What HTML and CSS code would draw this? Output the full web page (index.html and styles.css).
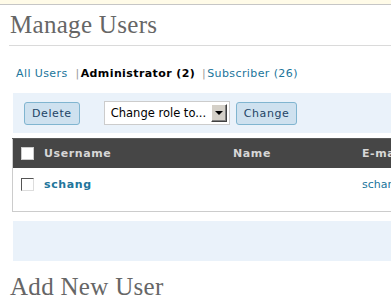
FILE: index.html
```html
<!DOCTYPE html>
<html lang="en">
<head>
    <meta charset="UTF-8">
    <title>Manage Users</title>
    <link rel="stylesheet" href="styles.css">
</head>
<body>
    <div class="notice-strip"></div>
    <div class="wrap">
        <h2 class="page-title">Manage Users</h2>

        <ul class="subsubsub">
            <li><a href="#">All Users</a><span class="sep">|</span></li>
            <li><a href="#" class="current">Administrator (2)</a><span class="sep">|</span></li>
            <li><a href="#">Subscriber (26)</a></li>
        </ul>

        <div class="tablenav">
            <button type="button" class="button">Delete</button>
            <div class="role-select">
                <span class="role-label">Change role to...</span>
                <span class="role-arrow"></span>
            </div>
            <button type="button" class="button">Change</button>
        </div>

        <table class="widefat">
            <thead>
                <tr>
                    <th class="check-column"><span class="check head"></span></th>
                    <th class="col-user">Username</th>
                    <th class="col-name">Name</th>
                    <th class="col-email">E-mail</th>
                </tr>
            </thead>
            <tbody>
                <tr>
                    <td class="check-column"><span class="check"></span></td>
                    <td class="col-user"><a href="#" class="user-link">schang</a></td>
                    <td class="col-name"></td>
                    <td class="col-email"><a href="#">schang@example.com</a></td>
                </tr>
            </tbody>
        </table>

        <div class="tablenav empty"></div>

        <h2 class="section-title">Add New User</h2>
    </div>
</body>
</html>
```

FILE: styles.css
```css
body {
    margin: 0;
    font-family: "DejaVu Sans", Verdana, sans-serif;
    font-size: 11px;
    color: #333;
    background: #fff;
    overflow: hidden;
    width: 391px;
    height: 307px;
}

a {
    color: #21759b;
    text-decoration: none;
}

.notice-strip {
    height: 4px;
    background: #fffbe8;
    border-bottom: 1px solid #c6c6c6;
}

.wrap {
    width: 600px;
}

h2 {
    font-family: "Liberation Serif", "Times New Roman", serif;
    font-weight: normal;
    font-size: 25px;
    line-height: 29px;
    color: #666;
    margin: 0;
}

.page-title {
    margin-left: 9px;
    padding: 5px 0 6px 1px;
    border-bottom: 1px solid #dadada;
    letter-spacing: 0.3px;
}

.subsubsub {
    list-style: none;
    margin: 19px 0 0;
    padding: 0 0 0 16px;
    display: flex;
    line-height: 18px;
    letter-spacing: 0.4px;
}

.subsubsub .sep {
    color: #999;
    margin: 0 1px 0 8px;
}

.subsubsub li + li .sep {
    margin-left: 7px;
}

.subsubsub a.current {
    color: #000;
    font-weight: bold;
}

.tablenav {
    margin: 10px 0 0 13px;
    background: #eaf2fa;
    height: 40px;
    padding: 0 11px;
    display: flex;
    align-items: center;
}

.tablenav.empty {
    margin-top: 9px;
}

.button {
    font-family: "DejaVu Sans", Verdana, sans-serif;
    font-size: 11px;
    letter-spacing: 0.6px;
    color: #246;
    background: #cee1ef;
    border: 1px solid #80b5d0;
    border-radius: 3px;
    height: 23px;
    padding: 0 7px 0 7px;
}

.role-select {
    margin: 0 6px 0 24px;
    width: 117px;
    height: 22px;
    background: #fff;
    border: 1px solid #ccc;
    display: flex;
    align-items: center;
    justify-content: space-between;
    padding: 0 1px 0 6px;
    box-sizing: content-box;
    font-size: 11.5px;
    color: #000;
}

.role-arrow {
    width: 14px;
    height: 16px;
    background: #d4d0c8;
    border: 1px solid;
    border-color: #fff #404040 #404040 #fff;
    box-shadow: inset -1px -1px 0 #808080;
    position: relative;
    margin-right: 1px;
}

.role-arrow::after {
    content: "";
    position: absolute;
    left: 3px;
    top: 6px;
    border-left: 4px solid transparent;
    border-right: 4px solid transparent;
    border-top: 4px solid #000;
}

.widefat {
    margin: 5px 0 0 12px;
    width: 560px;
    border-collapse: collapse;
    border: 1px solid #ccc;
    border-top: none;
}

.widefat thead th {
    background: #464646;
    border-top: 1px solid #5a5a5a;
    color: #d7d7d7;
    font-weight: bold;
    text-align: left;
    height: 29px;
    padding: 0;
    letter-spacing: 0.6px;
}

.widefat td {
    height: 43px;
    padding: 0;
    vertical-align: top;
}

.widefat td .check,
.widefat td a {
    margin-top: 10px;
    display: inline-block;
}

.check-column {
    width: 23px;
    padding-left: 8px !important;
}

.col-user {
    width: 189px;
}

.col-name {
    width: 129px;
}

.user-link {
    font-weight: bold;
    letter-spacing: 0.6px;
}

.check {
    display: inline-block;
    width: 11px;
    height: 11px;
    background: #fff;
    border: 1px solid;
    border-color: #555 #ddd #ddd #555;
    vertical-align: middle;
}

.check.head {
    border-color: #ccc;
}

.section-title {
    margin: 11px 0 0 10px;
    font-size: 25px;
    letter-spacing: 0.3px;
}
```
